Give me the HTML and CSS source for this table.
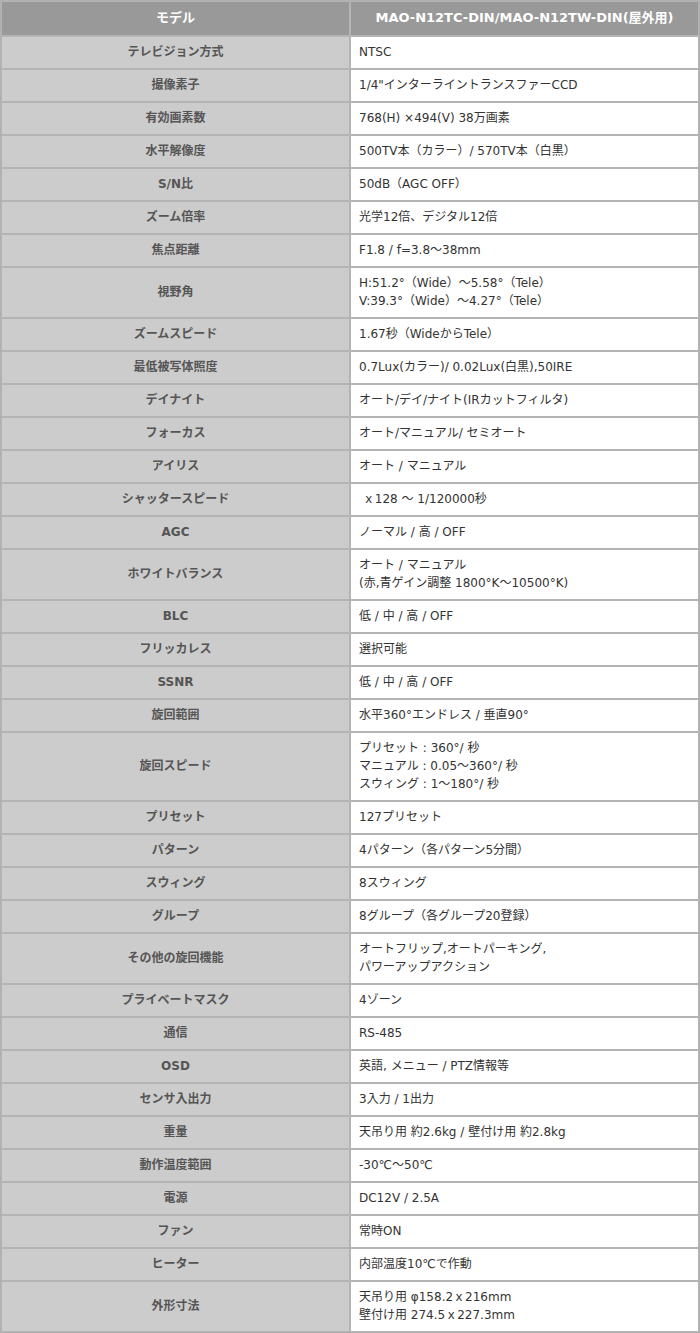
FILE: index.html
```html
<!DOCTYPE html>
<html lang="ja">
<head>
<meta charset="utf-8">
<link rel="stylesheet" href="styles.css">
</head>
<body>
<table class="spec">
<thead>
<tr><th class="hl">モデル</th><th class="hv">MAO-N12TC-DIN/MAO-N12TW-DIN(屋外用)</th></tr>
</thead>
<tbody>
<tr><th>テレビジョン方式</th><td>NTSC</td></tr>
<tr><th>撮像素子</th><td>1/4"インターライントランスファーCCD</td></tr>
<tr><th>有効画素数</th><td>768(H) ×494(V) 38万画素</td></tr>
<tr><th>水平解像度</th><td>500TV本（カラー）/ 570TV本（白黒）</td></tr>
<tr><th>S/N比</th><td>50dB（AGC OFF）</td></tr>
<tr><th>ズーム倍率</th><td>光学12倍、デジタル12倍</td></tr>
<tr><th>焦点距離</th><td>F1.8 / f=3.8～38mm</td></tr>
<tr><th>視野角</th><td>H:51.2°（Wide）～5.58°（Tele）<br>V:39.3°（Wide）～4.27°（Tele）</td></tr>
<tr><th>ズームスピード</th><td>1.67秒（WideからTele）</td></tr>
<tr><th>最低被写体照度</th><td>0.7Lux(カラー)/ 0.02Lux(白黒),50IRE</td></tr>
<tr><th>デイナイト</th><td>オート/デイ/ナイト(IRカットフィルタ)</td></tr>
<tr><th>フォーカス</th><td>オート/マニュアル/ セミオート</td></tr>
<tr><th>アイリス</th><td>オート / マニュアル</td></tr>
<tr><th>シャッタースピード</th><td>&nbsp;ｘ128 ～ 1/120000秒</td></tr>
<tr><th>AGC</th><td>ノーマル / 高 / OFF</td></tr>
<tr><th>ホワイトバランス</th><td>オート / マニュアル<br>(赤,青ゲイン調整 1800°K～10500°K)</td></tr>
<tr><th>BLC</th><td>低 / 中 / 高 / OFF</td></tr>
<tr><th>フリッカレス</th><td>選択可能</td></tr>
<tr><th>SSNR</th><td>低 / 中 / 高 / OFF</td></tr>
<tr><th>旋回範囲</th><td>水平360°エンドレス / 垂直90°</td></tr>
<tr><th>旋回スピード</th><td>プリセット : 360°/ 秒<br>マニュアル : 0.05～360°/ 秒<br>スウィング : 1～180°/ 秒</td></tr>
<tr><th>プリセット</th><td>127プリセット</td></tr>
<tr><th>パターン</th><td>4パターン（各パターン5分間）</td></tr>
<tr><th>スウィング</th><td>8スウィング</td></tr>
<tr><th>グループ</th><td>8グループ（各グループ20登録）</td></tr>
<tr><th>その他の旋回機能</th><td>オートフリップ,オートパーキング,<br>パワーアップアクション</td></tr>
<tr><th>プライベートマスク</th><td>4ゾーン</td></tr>
<tr><th>通信</th><td>RS-485</td></tr>
<tr><th>OSD</th><td>英語, メニュー / PTZ情報等</td></tr>
<tr><th>センサ入出力</th><td>3入力 / 1出力</td></tr>
<tr><th>重量</th><td>天吊り用 約2.6kg / 壁付け用 約2.8kg</td></tr>
<tr><th>動作温度範囲</th><td>-30℃～50℃</td></tr>
<tr><th>電源</th><td>DC12V / 2.5A</td></tr>
<tr><th>ファン</th><td>常時ON</td></tr>
<tr><th>ヒーター</th><td>内部温度10℃で作動</td></tr>
<tr><th>外形寸法</th><td>天吊り用 φ158.2ｘ216mm<br>壁付け用 274.5ｘ227.3mm</td></tr>
</tbody>
</table>
</body>
</html>
```
FILE: styles.css
```css
html, body {
  margin: 0;
  padding: 0;
  background: #ffffff;
}
.spec {
  width: 700px;
  border-collapse: separate;
  border-spacing: 0;
  border: 1px solid #b0b0b0;
  font-family: "DejaVu Sans", "Noto Sans CJK JP", sans-serif;
  font-size: 12px;
  line-height: 18px;
  table-layout: fixed;
}
.spec th, .spec td {
  border: 1px solid #b4b4b4;
  padding: 6px 8px 7px;
  vertical-align: middle;
}
.spec tbody th {
  width: 50%;
  background: #cccccc;
  color: #555555;
  font-weight: bold;
  text-align: center;
}
.spec tbody td {
  background: #ffffff;
  color: #333333;
  text-align: left;
}
.spec thead th {
  background: #999999;
  color: #ffffff;
  font-weight: bold;
  font-size: 13px;
  text-align: center;
  padding: 7px 8px 8px;
}
```
